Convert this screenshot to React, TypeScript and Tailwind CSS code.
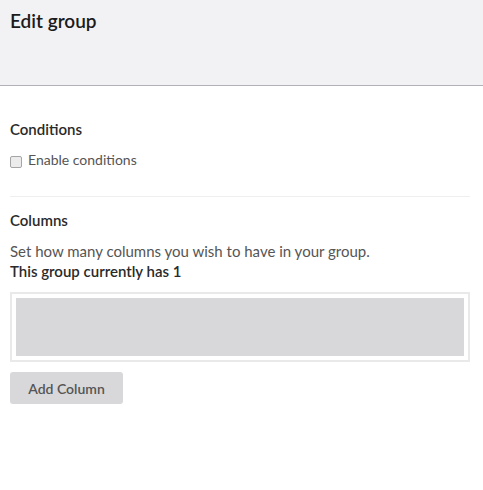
import React from "react";

export default function App() {
    return (
        <div className="w-[483px] h-[490px] bg-white font-['Lato','Liberation_Sans',sans-serif]">
            <div className="h-[86px] bg-[#f2f2f4] border-b border-[#b3b1b8] px-[10px] pt-[9px]">
                <h1 className="text-[19px] font-semibold text-[#1b1b1b] leading-[24px]">Edit group</h1>
            </div>

            <div className="pl-[10px] pr-[13px] pt-[33px]">
                <h2 className="text-[15px] font-semibold text-[#2a2a2a] leading-[20px]">Conditions</h2>
                <label className="flex items-start gap-[6px] mt-[12px] text-[14px] text-[#555] leading-[18px]">
                    <input
                        type="checkbox"
                        className="appearance-none w-[12px] h-[12px] m-0 mt-[5px] rounded-[2px] border border-[#a5a5a5] bg-[#ececec]"
                    />
                    Enable conditions
                </label>

                <div className="mt-[27px] border-t border-[#efefef]" />

                <h2 className="mt-[13px] text-[15px] font-semibold text-[#2a2a2a] leading-[20px]">Columns</h2>
                <p className="mt-[11px] text-[15px] text-[#555] leading-[20px]">
                    Set how many columns you wish to have in your group.
                </p>
                <p className="text-[15px] font-semibold text-[#2a2a2a] leading-[20px]">This group currently has 1</p>

                <div className="mt-[11px] border-2 border-[#e9e9e9] p-[4px]">
                    <div className="h-[58px] bg-[#d8d8da]" />
                </div>

                <button className="mt-[10px] w-[113px] h-[32px] rounded-[3px] bg-[#d8d8da] text-[14px] font-semibold text-[#555]">
                    Add Column
                </button>
            </div>
        </div>
    );
}
